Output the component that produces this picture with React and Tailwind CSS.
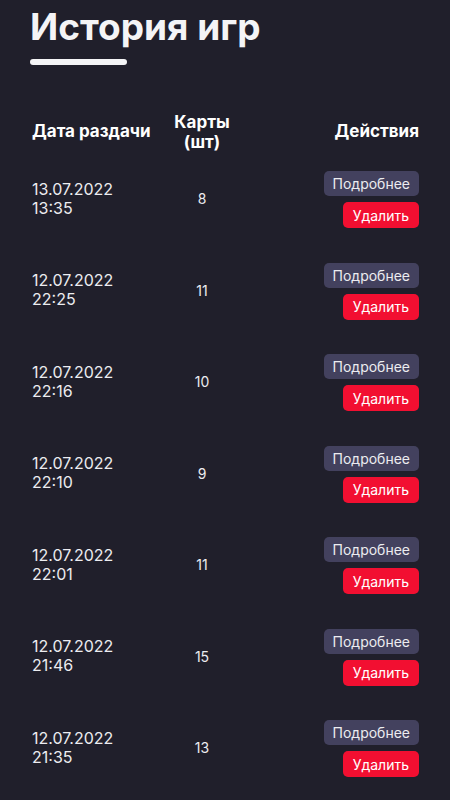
import React from "react";

const games = [
  { date: "13.07.2022", time: "13:35", cards: 8 },
  { date: "12.07.2022", time: "22:25", cards: 11 },
  { date: "12.07.2022", time: "22:16", cards: 10 },
  { date: "12.07.2022", time: "22:10", cards: 9 },
  { date: "12.07.2022", time: "22:01", cards: 11 },
  { date: "12.07.2022", time: "21:46", cards: 15 },
  { date: "12.07.2022", time: "21:35", cards: 13 },
];

function GameRow({ game }) {
  return (
    <div className="grid grid-cols-[139px_62px_1fr] items-center h-[91.5px]">
      <div className="text-[16px] leading-[19px] text-[#ececf0]">
        <div>{game.date}</div>
        <div>{game.time}</div>
      </div>
      <div className="text-center text-[14px] text-[#ececf0]">{game.cards}</div>
      <div className="flex flex-col items-end gap-[6px] pt-[2px]">
        <button className="h-[25px] px-[9px] rounded-[5px] bg-[#43415e] text-[14px] text-[#ececf0]">
          Подробнее
        </button>
        <button className="h-[26px] px-[10px] rounded-[5px] bg-[#f20f31] text-[14px] text-white">
          Удалить
        </button>
      </div>
    </div>
  );
}

export default function App() {
  return (
    <div className="min-h-[800px] bg-[#201f2b] px-[30px] overflow-hidden font-['Inter',sans-serif]">
      <h1 className="pt-[7px] text-[37px] leading-[40px] font-bold text-[#f4f4f6]">История игр</h1>
      <div className="mt-[12px] w-[97px] h-[6px] rounded-full bg-[#f4f4f6]" />
      <div className="mt-[46px] pl-[2px] pr-[1px]">
        <div className="grid grid-cols-[139px_62px_1fr] items-center h-[42px] text-[17px] font-bold text-white">
          <div>Дата раздачи</div>
          <div className="text-center leading-[20px]">
            Карты
            <br />
            (шт)
          </div>
          <div className="text-right">Действия</div>
        </div>
        {games.map((g, i) => (
          <GameRow key={i} game={g} />
        ))}
      </div>
    </div>
  );
}
